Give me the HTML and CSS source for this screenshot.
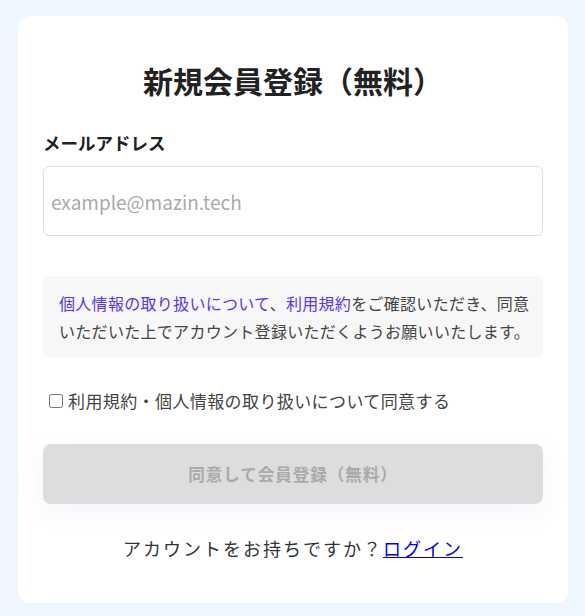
FILE: index.html
```html
<!DOCTYPE html>
<html lang="ja">
<head>
<meta charset="utf-8">
<title>新規会員登録</title>
<link rel="stylesheet" href="styles.css">
</head>
<body>
<main class="page">
  <section class="card">
    <h1 class="title">新規会員登録（無料）</h1>
    <label class="field-label" for="email">メールアドレス</label>
    <input class="input" id="email" type="email" placeholder="example@mazin.tech">
    <div class="notice">
      <a class="notice-link" href="#">個人情報の取り扱いについて</a>、<a class="notice-link" href="#">利用規約</a>をご確認いただき、同意<br>いただいた上でアカウント登録いただくようお願いいたします。
    </div>
    <label class="agree">
      <input class="agree-box" type="checkbox">
      <span>利用規約・個人情報の取り扱いについて同意する</span>
    </label>
    <button class="submit" type="button" disabled>同意して会員登録（無料）</button>
    <p class="footer">アカウントをお持ちですか？<a class="login" href="#">ログイン</a></p>
  </section>
</main>
</body>
</html>
```

FILE: styles.css
```css
html, body {
  margin: 0;
  padding: 0;
  background: #eef6ff;
}
body {
  font-family: "Noto Sans CJK JP", "Noto Sans", sans-serif;
  color: #222;
}
.page {
  padding: 16px 17px 12px 18px;
}
.card {
  background: #fff;
  border-radius: 12px;
  padding: 44px 25px 41px;
  display: flex;
  flex-direction: column;
}
.title {
  margin: 0;
  font-size: 30px;
  line-height: 40px;
  font-weight: 700;
  text-align: center;
  color: #222;
}
.field-label {
  margin-top: 31px;
  font-size: 17.5px;
  line-height: 24px;
  font-weight: 700;
  color: #222;
}
.input {
  margin-top: 11px;
  box-sizing: border-box;
  height: 70px;
  width: 100%;
  border: 1px solid #dedede;
  border-radius: 6px;
  padding: 0 7px;
  font-family: "Noto Sans CJK JP", "Noto Sans", sans-serif;
  font-size: 19px;
  color: #222;
  outline: none;
}
.input::placeholder {
  color: #aaa;
}
.notice {
  margin-top: 40px;
  background: #f7f7f7;
  border-radius: 6px;
  padding: 13px 8px 12px 16px;
  font-size: 16px;
  line-height: 28px;
  letter-spacing: 0.3px;
  white-space: nowrap;
  color: #444;
}
.notice-link {
  color: #5a34f5;
  text-decoration: none;
}
.agree {
  margin-top: 32px;
  display: flex;
  align-items: center;
  font-size: 17px;
  line-height: 24px;
  letter-spacing: 0.4px;
  color: #444;
}
.agree-box {
  margin: 0 5px 0 6px;
  width: 14px;
  height: 14px;
}
.submit {
  margin-top: 31px;
  height: 60px;
  width: 100%;
  border: none;
  border-radius: 8px;
  background: #dddddd;
  color: #a9a9a9;
  font-family: "Noto Sans CJK JP", "Noto Sans", sans-serif;
  font-size: 16.5px;
  font-weight: 700;
  letter-spacing: 1px;
  box-shadow: 0 8px 28px rgba(40, 90, 200, 0.06);
}
.footer {
  margin: 30px 0 0;
  text-align: center;
  font-size: 18px;
  line-height: 28px;
  letter-spacing: 2px;
  color: #333;
}
.login {
  color: #0000ee;
  text-decoration: underline;
}
```
